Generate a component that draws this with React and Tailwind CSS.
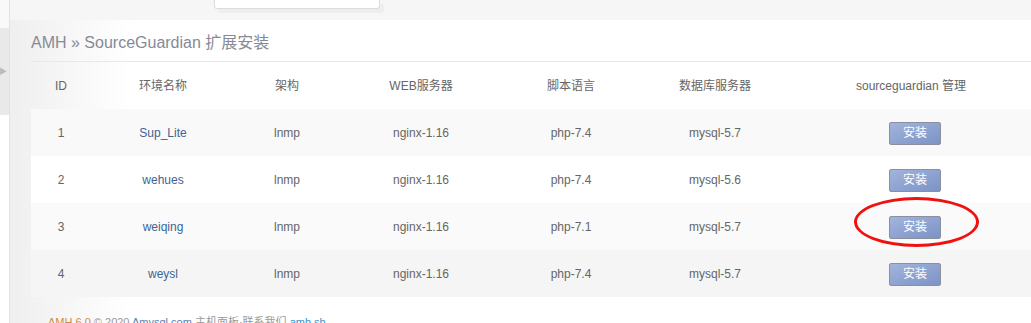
import React from 'react';

const rows = [
  { id: 1, name: 'Sup_Lite', arch: 'lnmp', web: 'nginx-1.16', php: 'php-7.4', db: 'mysql-5.7', bg: 'bg-[#f9f9f9]' },
  { id: 2, name: 'wehues', arch: 'lnmp', web: 'nginx-1.16', php: 'php-7.4', db: 'mysql-5.6', bg: 'bg-white' },
  { id: 3, name: 'weiqing', arch: 'lnmp', web: 'nginx-1.16', php: 'php-7.1', db: 'mysql-5.7', bg: 'bg-[#fafafa]' },
  { id: 4, name: 'weysl', arch: 'lnmp', web: 'nginx-1.16', php: 'php-7.4', db: 'mysql-5.7', bg: 'bg-[#f5f5f5]' },
];

const cols = ['w-[60px]', 'w-[144px]', 'w-[104px]', 'w-[164px]', 'w-[136px]', 'w-[152px]', 'w-[240px]'];
const heads = ['ID', '环境名称', '架构', 'WEB服务器', '脚本语言', '数据库服务器', 'sourceguardian 管理'];

export default function App() {
  return (
    <div className="flex w-[1031px] h-[323px] overflow-hidden bg-white text-[12px] text-[#666]" style={{ fontFamily: '"Liberation Sans", Arial, "Noto Sans CJK SC", sans-serif' }}>
      {/* Sidebar edge */}
      <div className="w-[10px] flex flex-col border-r border-[#e2e2e2] shrink-0">
        <div className="h-[28px] bg-[#f9f9f9]"></div>
        <div className="h-[87px] bg-[#e9e9e9] flex items-center">
          <span className="text-[8px] text-[#bbb] leading-none -ml-[1px]">▶</span>
        </div>
        <div className="flex-1 bg-white"></div>
      </div>

      <div className="flex-1 flex flex-col">
        {/* Top bar */}
        <div className="h-[20px] bg-[#f6f6f6] shrink-0 relative">
          <div className="ml-[204px] w-[166px] h-[9px] bg-white border border-t-0 border-[#dcdcdc] rounded-b-[3px] shadow-[4px_4px_0_#eeeeee]"></div>
        </div>

        {/* Panel */}
        <div className="flex-1 bg-gradient-to-r from-[#efefef] via-white via-[12%] to-white pl-[21px] relative">
          <div className="h-[42px] flex items-center border-b border-[#e8e8e8] text-[16px] text-[#878a94] pt-[5px]">
            AMH » SourceGuardian 扩展安装
          </div>

          <div className="w-[1000px]">
            <div className="flex h-[47px] items-center">
              {heads.map((h, i) => (
                <div key={h} className={`${cols[i]} text-center text-[#666]`}>{h}</div>
              ))}
            </div>
            {rows.map((r) => (
              <div key={r.id} className={`flex h-[47px] items-center ${r.bg}`}>
                <div className={`${cols[0]} text-center`}>{r.id}</div>
                <div className={`${cols[1]} text-center text-[#3d6592]`}>{r.name}</div>
                <div className={`${cols[2]} text-center`}>{r.arch}</div>
                <div className={`${cols[3]} text-center`}>{r.web}</div>
                <div className={`${cols[4]} text-center`}>{r.php}</div>
                <div className={`${cols[5]} text-center`}>{r.db}</div>
                <div className={`${cols[6]} flex justify-center`}>
                  <button className="w-[52px] h-[23px] ml-[8px] mt-[1px] rounded-[2px] border border-[#8c8f9e] bg-gradient-to-br from-[#a3b4dc] to-[#7b93c6] text-white text-[12px] leading-none">安装</button>
                </div>
              </div>
            ))}
          </div>

          <div className="pt-[20px] pl-[17px] text-[11px] text-[#999] leading-none whitespace-nowrap">
            <span className="text-[#d08a4a]">AMH 6.0</span> © 2020 <span className="text-[#5a7fb0]">Amysql.com</span> 主机面板·联系我们 <span className="text-[#3a8fd0]">amh.sh</span>
          </div>

          {/* Red annotation ellipse */}
          <div className="absolute left-[844px] top-[177px] w-[125px] h-[50px] rounded-[50%] border-[3px] border-[#f01010] pointer-events-none"></div>
        </div>
      </div>
    </div>
  );
}
